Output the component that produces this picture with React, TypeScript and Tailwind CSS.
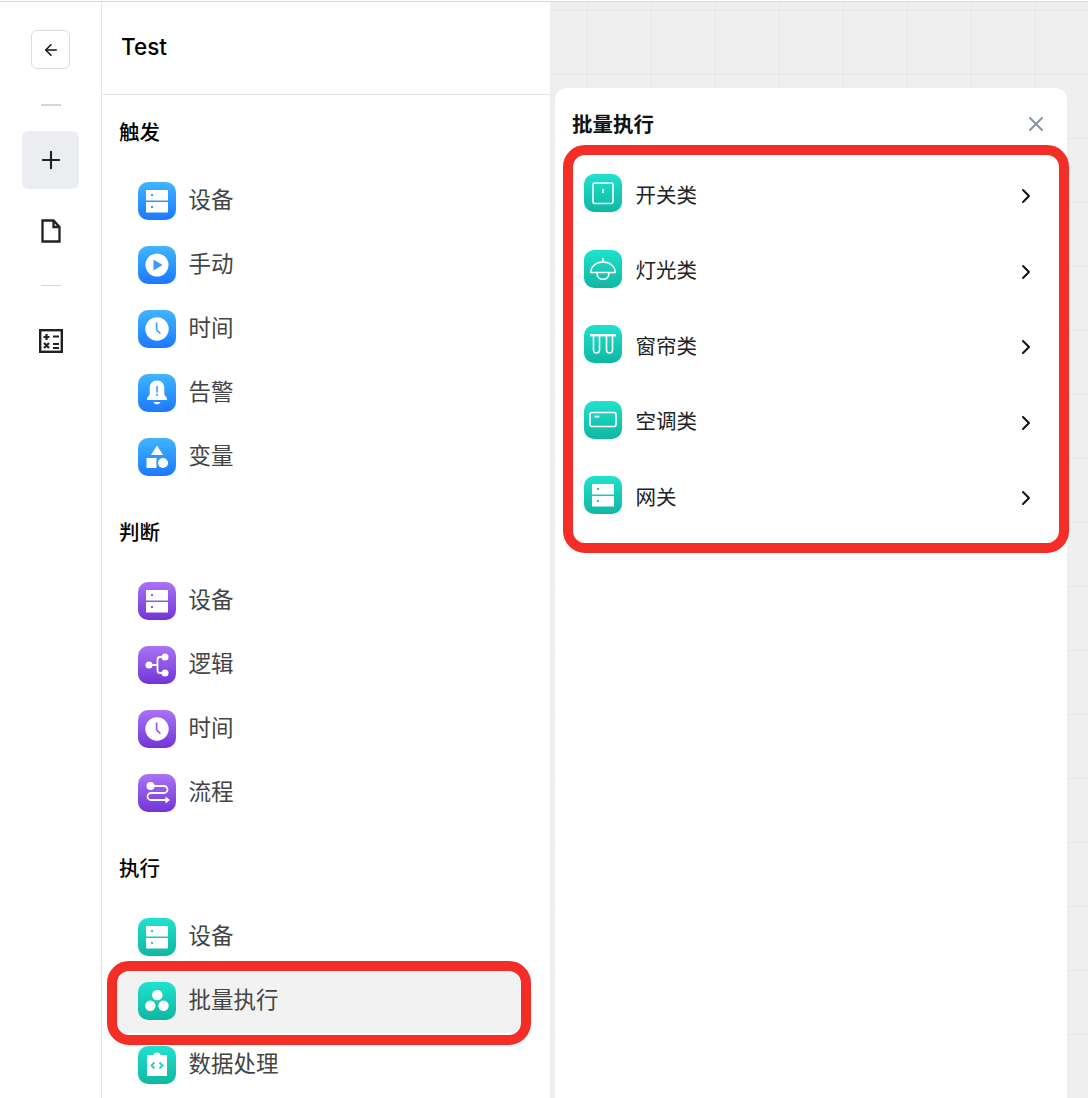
import React from "react";
import { ArrowLeft, Plus, X, ChevronRight } from "lucide-react";

type Tone = "blue" | "purple" | "teal";

const toneClass: Record<Tone, string> = {
  blue: "bg-linear-to-b from-[#41b4ff] to-[#1f78ff]",
  purple: "bg-linear-to-b from-[#aa72f6] to-[#7333d5]",
  teal: "bg-linear-to-b from-[#1fe2ce] to-[#10b7a1]",
};
const toneColor: Record<Tone, string> = { blue: "#3a9bff", purple: "#8f54e8", teal: "#1fd0bc" };

function Glyph({ name, c }: { name: string; c: string }) {
  switch (name) {
    case "server":
      return (
        <>
          <rect x="8" y="8" width="22" height="10.5" fill="#fff" />
          <rect x="8" y="20" width="22" height="10.5" fill="#fff" />
          <rect x="13" y="12" width="2" height="2" fill={c} />
          <rect x="13" y="24" width="2" height="2" fill={c} />
        </>
      );
    case "play":
      return (
        <>
          <circle cx="19" cy="19" r="11.5" fill="#fff" />
          <path d="M15.5 13.5 24.5 19l-9 5.5z" fill={c} />
        </>
      );
    case "clock":
      return (
        <>
          <circle cx="19" cy="19" r="11.7" fill="#fff" />
          <path d="M18.6 12.5v7.2l3.8 4" fill="none" stroke={c} strokeWidth="1.6" />
        </>
      );
    case "bell":
      return (
        <>
          <path d="M19 6.5c-4.6 0-7.300 3.400-7.300 7.600v6.400L9 24.300V26h20v-1.700l-2.700-3.800v-6.400c0-4.200-2.700-7.600-7.300-7.600z" fill="#fff" />
          <path d="M15.500 28h7c-.6 1.500-2 2.500-3.500 2.500s-2.900-1-3.500-2.500z" fill="#fff" />
          <rect x="18.200" y="12" width="1.600" height="6.500" fill={c} />
          <rect x="18.200" y="19.800" width="1.600" height="2" fill={c} />
        </>
      );
    case "shapes":
      return (
        <>
          <path d="M19 7.500 25 17H13z" fill="#fff" />
          <rect x="8.500" y="20" width="10" height="10" fill="#fff" />
          <circle cx="25" cy="25" r="5" fill="#fff" />
        </>
      );
    case "branch":
      return (
        <>
          <circle cx="11" cy="19" r="3.500" fill="#fff" />
          <circle cx="27" cy="11" r="3.500" fill="#fff" />
          <circle cx="27" cy="27" r="3.500" fill="#fff" />
          <path d="M11 19h8M26 11h-4a2.500 2.500 0 0 0-2.500 2.500v11A2.500 2.500 0 0 0 22 27h4" fill="none" stroke="#fff" strokeWidth="1.800" />
        </>
      );
    case "flow":
      return (
        <>
          <circle cx="12.500" cy="12" r="4" fill="#fff" />
          <path d="M14 12h12a3.200 3.200 0 0 1 0 7H13a3.300 3.300 0 0 0 0 7h15" fill="none" stroke="#fff" strokeWidth="1.800" />
          <path d="M27.500 22.500 32 26l-4.500 3.500z" fill="#fff" />
        </>
      );
    case "dots":
      return (
        <>
          <circle cx="19.300" cy="13" r="5.300" fill="#fff" />
          <circle cx="12.300" cy="23.700" r="5.200" fill="#fff" />
          <circle cx="25.500" cy="23.700" r="5.200" fill="#fff" />
        </>
      );
    case "code":
      return (
        <>
          <path d="M9 9h6.500a3.500 2.500 0 0 1 7 0H29v21H9z" fill="#fff" />
          <path d="M16.500 16.500 13.500 19.500l3 3M21.500 16.500l3 3-3 3" fill="none" stroke={c} strokeWidth="1.800" />
        </>
      );
    case "switch":
      return (
        <>
          <rect x="9" y="9" width="20" height="20.500" rx="2" fill="none" stroke="#fff" strokeWidth="1.600" />
          <rect x="18.200" y="15" width="1.600" height="4" fill="#fff" />
        </>
      );
    case "lamp":
      return (
        <>
          <path d="M19 8v4" stroke="#fff" strokeWidth="1.600" />
          <path d="M6.800 22.500c0-6 5.200-10.500 12.200-10.500s12.200 4.500 12.200 10.500z" fill="none" stroke="#fff" strokeWidth="1.600" />
          <path d="M13 23c0 4 2.600 6.300 6 6.300s6-2.300 6-6.300" fill="none" stroke="#fff" strokeWidth="1.600" />
        </>
      );
    case "curtain":
      return (
        <>
          <rect x="6" y="9" width="26" height="2.400" fill="#fff" />
          <path d="M9.500 11v14a3 3 0 0 0 6 0V11M22.500 11v14a3 3 0 0 0 6 0V11" fill="none" stroke="#fff" strokeWidth="1.600" />
        </>
      );
    case "ac":
      return (
        <>
          <rect x="6" y="11.500" width="26" height="14" rx="2" fill="none" stroke="#fff" strokeWidth="1.600" />
          <rect x="10.300" y="14.700" width="5" height="1.800" fill="#fff" />
        </>
      );
    default:
      return null;
  }
}

function AppIcon({ name, tone }: { name: string; tone: Tone }) {
  return (
    <span className={`flex h-[38px] w-[38px] shrink-0 rounded-[10px] ${toneClass[tone]}`}>
      <svg viewBox="0 0 38 38" width="38" height="38">
        <Glyph name={name} c={toneColor[tone]} />
      </svg>
    </span>
  );
}

function Row({ label, icon, tone, active }: { label: string; icon: string; tone: Tone; active?: boolean }) {
  return (
    <div className={`flex h-16 shrink-0 items-center gap-[12.500px] pl-[21px] ${active ? "bg-[#f2f2f2]" : ""}`}>
      <AppIcon name={icon} tone={tone} />
      <span className="mb-[2px] text-[22.5px] leading-none text-[#444444]">{label}</span>
    </div>
  );
}

function Section({ title, tone, items }: { title: string; tone: Tone; items: { label: string; icon: string; active?: boolean }[] }) {
  return (
    <section className="flex flex-col">
      <h2 className="mb-[22px] h-7 pl-[2px] text-[20.5px] font-medium leading-7 text-black">{title}</h2>
      {items.map((it) => (
        <Row key={it.label} label={it.label} icon={it.icon} tone={tone} active={it.active} />
      ))}
    </section>
  );
}

const batch = [
  { label: "开关类", icon: "switch" },
  { label: "灯光类", icon: "lamp" },
  { label: "窗帘类", icon: "curtain" },
  { label: "空调类", icon: "ac" },
  { label: "网关", icon: "server" },
];

export default function App() {
  return (
    <div className="relative flex h-[1098px] w-[1088px] flex-col overflow-hidden bg-white pt-px font-['Inter','Noto_Sans_CJK_SC',sans-serif]">
      <div className="flex min-h-0 flex-1 border-t border-[#d9d8e0]">
        {/* Rail */}
        <aside className="flex w-[102px] shrink-0 flex-col items-center border-r border-[#e4e4e8] pt-[28px]">
          <button className="flex h-[39px] w-[39px] items-center justify-center rounded-md border border-[#dcdcdc] bg-white text-[#111]">
            <ArrowLeft size={18} strokeWidth={2} />
          </button>
          <div className="mt-[35px] h-[2px] w-5 bg-[#d4d4da]" />
          <button className="mt-[25px] flex h-[58px] w-[57px] items-center justify-center rounded-md bg-[#ecedf1] text-[#222]">
            <Plus size={28} strokeWidth={1.8} />
          </button>
          <svg className="mt-[30px]" width="24" height="24" viewBox="0 0 24 24" fill="none" stroke="#222" strokeWidth="2.300">
            <path d="M3.500 1.500h11l6 6.500v14.500h-17zM14.500 1.500V8h6" />
          </svg>
          <div className="mt-[42px] h-px w-5 bg-[#d4d4da]" />
          <svg className="mt-[43px]" width="24" height="24" viewBox="0 0 24 24" fill="none" stroke="#222" strokeWidth="2.400">
            <rect x="1.200" y="1.200" width="21.600" height="21.600" />
            <path d="M4.500 8h6M7.500 5v6M14 7.500h6M5 14l5 5M10 14l-5 5M14 15h6M14 19h6" strokeWidth="2.200" />
          </svg>
        </aside>

        {/* Sidebar */}
        <div className="flex w-[448px] shrink-0 flex-col bg-white">
          <header className="flex h-[93px] shrink-0 items-center border-b border-[#e4e4e8] pl-[19px] pb-[2px]">
            <h1 className="text-[22.500px] font-medium leading-none text-black">Test</h1>
          </header>
          <div className="flex flex-col gap-[30px] pl-[15px] pr-[28px] pt-[24px]">
            <Section
              title="触发"
              tone="blue"
              items={[
                { label: "设备", icon: "server" },
                { label: "手动", icon: "play" },
                { label: "时间", icon: "clock" },
                { label: "告警", icon: "bell" },
                { label: "变量", icon: "shapes" },
              ]}
            />
            <Section
              title="判断"
              tone="purple"
              items={[
                { label: "设备", icon: "server" },
                { label: "逻辑", icon: "branch" },
                { label: "时间", icon: "clock" },
                { label: "流程", icon: "flow" },
              ]}
            />
            <Section
              title="执行"
              tone="teal"
              items={[
                { label: "设备", icon: "server" },
                { label: "批量执行", icon: "dots", active: true },
                { label: "数据处理", icon: "code" },
              ]}
            />
          </div>
        </div>

        {/* Canvas */}
        <main className="flex min-w-0 flex-1 flex-col bg-[#efefef] bg-[image:linear-gradient(#e6e6e6_1px,transparent_1px),linear-gradient(90deg,#e6e6e6_1px,transparent_1px),linear-gradient(#eeeeee_1px,transparent_1px),linear-gradient(90deg,#eeeeee_1px,transparent_1px)] bg-[size:64px_64px,64px_64px,12.8px_12.8px,12.8px_12.8px] bg-[position:37px_8px,37px_8px,37px_8px,37px_8px] pl-[5px] pr-[21px] pt-[86px]">
          <div className="flex flex-1 flex-col rounded-t-xl bg-white pt-[22px]">
            <div className="flex h-7 items-center justify-between pl-[17px] pr-[19px]">
              <h2 className="mt-[2px] text-[20.500px] font-semibold leading-7 text-[#111]">批量执行</h2>
              <X size={24} strokeWidth={2} className="text-[#8a94a3]" />
            </div>
            <ul className="mt-[20.400px] flex flex-col">
              {batch.map((b) => (
                <li key={b.label} className="flex h-[75.5px] items-center pl-[29px] pr-[29px]">
                  <span className="mb-[6px] flex">
                    <AppIcon name={b.icon} tone="teal" />
                  </span>
                  <span className="ml-[13.500px] flex-1 text-[20.500px] leading-none text-[#222]">{b.label}</span>
                  <ChevronRight size={24} strokeWidth={2} className="text-[#111]" />
                </li>
              ))}
            </ul>
          </div>
        </main>
      </div>

      {/* Red annotation frames */}
      <div className="pointer-events-none absolute left-[107px] top-[961px] h-[84px] w-[424px] rounded-[22px] border-[10px] border-[#f52d27]" />
      <div className="pointer-events-none absolute left-[563px] top-[145px] h-[408px] w-[506px] rounded-[22px] border-[10px] border-[#f52d27]" />
    </div>
  );
}
